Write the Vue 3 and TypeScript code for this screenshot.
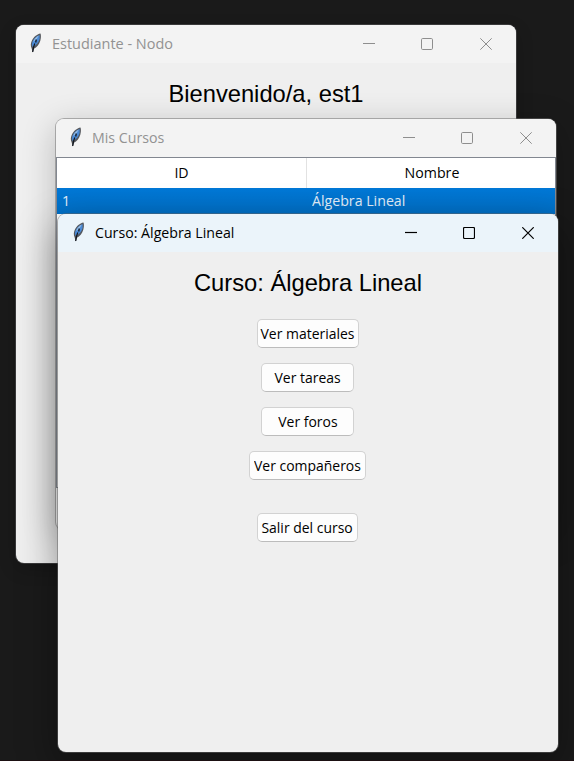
<script setup lang="ts">
interface WindowInfo {
  id: string
  title: string
}

const windows: WindowInfo[] = [
  { id: 'student', title: 'Estudiante - Nodo' },
  { id: 'courses', title: 'Mis Cursos' },
  { id: 'course', title: 'Curso: Álgebra Lineal' },
]

const actions = [
  { id: 'materials', label: 'Ver materiales' },
  { id: 'tasks', label: 'Ver tareas' },
  { id: 'forums', label: 'Ver foros' },
  { id: 'mates', label: 'Ver compañeros' },
  { id: 'leave', label: 'Salir del curso' },
]
</script>

<template>
  <main class="desktop">
    <section v-for="win in windows" :key="win.id" class="window" :class="win.id">
      <header class="titlebar">
        <svg class="feather" width="13" height="20" viewBox="0 0 13 20">
          <path d="M11.500.500C7.800 1.200 4.400 4.200 2.800 7.800 1.600 10.300 1.500 13 2.600 15.300L3.700 19.400 4.900 15.800C7.800 14.300 10.100 11.500 11.300 7.700 12 5.200 12.200 2.500 11.500.500Z" fill="#55585d" />
          <path d="M10.600 2C7.300 3.200 4.500 5.800 3.400 9 2.800 10.900 2.900 12.800 3.700 14 7.200 12.500 9.700 9.300 10.600 6Z" fill="#4a8ad6" />
          <path d="M9.800 2.600C7.200 4 5 6.300 4.200 9L7.400 6.600Z" fill="#9cc0e6" />
          <path d="M5.800 10.500C4.700 12.800 4.100 15.500 3.700 19M7.300 6.500 6.700 9.500" fill="none" stroke="#14181f" stroke-width="1.300" />
        </svg>
        <span class="title">{{ win.title }}</span>
        <div class="controls">
          <svg width="12" height="12" viewBox="0 0 12 12"><path d="M0 5.500H12" /></svg>
          <svg width="12" height="12" viewBox="0 0 12 12"><rect x=".5" y=".5" width="11" height="11" rx="1.200" /></svg>
          <svg width="12" height="12" viewBox="0 0 12 12"><path d="M.3.300 11.700 11.700M11.700.300.300 11.700" /></svg>
        </div>
      </header>

      <h1 v-if="win.id === 'student'" class="heading">Bienvenido/a, est1</h1>

      <div v-else-if="win.id === 'courses'" class="tree">
        <div class="row head">
          <div><span>ID</span></div>
          <div><span>Nombre</span></div>
        </div>
        <div class="row selected">
          <div><span>1</span></div>
          <div><span>Álgebra Lineal</span></div>
        </div>
      </div>

      <template v-else>
        <h1 class="heading">Curso: Álgebra Lineal</h1>
        <div class="actions">
          <button v-for="action in actions" :key="action.id" :class="action.id">
            <span>{{ action.label }}</span>
          </button>
        </div>
      </template>
    </section>
  </main>
</template>

<style>
body {
  background: #1a1a1a;
}
</style>

<style scoped>
.desktop {
  position: relative;
  width: 574px;
  height: 761px;
  overflow: hidden;
  background: #1a1a1a;
  border-bottom: 1px solid #1b1012;
  box-sizing: border-box;
  font-family: "Open Sans", "Noto Sans", sans-serif;
}
.window {
  position: absolute;
  width: 500px;
  height: 538px;
  border-radius: 8px;
  background: #efefef;
  display: flex;
  flex-direction: column;
}
.student {
  left: 16px;
  top: 25px;
  box-shadow: 0 0 0 1px #39393a, 0 6px 18px rgba(0, 0, 0, .2);
}
.courses {
  left: 56px;
  top: 119px;
  height: 411px;
  box-shadow: 0 0 0 1px rgba(110, 110, 110, .5), 0 8px 34px rgba(0, 0, 0, .24);
}
.course {
  left: 58px;
  top: 214px;
  box-shadow: 0 0 0 1px rgba(100, 100, 100, .5), 0 14px 38px 2px rgba(0, 0, 0, .36);
}
.titlebar {
  display: flex;
  align-items: center;
  flex: none;
  height: 38px;
  box-sizing: border-box;
  padding: 0 24px 0 13px;
  background: #f3f3f3;
  border-radius: 8px 8px 0 0;
  color: #929292;
}
.course .titlebar {
  background: #ebf4fa;
  color: #000;
  padding-left: 14px;
}
.feather {
  flex: none;
  margin-top: -3px;
}
.title {
  margin: -2px 0 0 10px;
  font-size: 15px;
  line-height: 20px;
  white-space: nowrap;
  transform-origin: left;
  transform: scaleX(.945);
}
.student .title {
  transform: scaleX(.965);
}
.controls {
  display: flex;
  gap: 46px;
  margin-left: auto;
}
.controls svg:last-child {
  margin-left: 1px;
}
.controls svg {
  fill: none;
  stroke: #8e8e8e;
  stroke-width: 1;
}
.course .controls svg {
  stroke: #000;
  stroke-width: 1.200;
}
.heading {
  margin: 14px 0 0;
  text-align: center;
  font: 400 24px/34px "Liberation Sans", Arial, sans-serif;
  color: #000;
  white-space: nowrap;
  transform: scaleX(.988);
}
.tree {
  height: 331px;
  box-sizing: border-box;
  border: 1px solid #828790;
  background: #fff;
  color: #000;
}
.row {
  display: grid;
  grid-template-columns: 250px 1fr;
  font-size: 15px;
  line-height: 25px;
}
.row span {
  display: inline-block;
  transform: scaleX(.945);
}
.head {
  height: 30px;
  text-align: center;
  line-height: 28px;
}
.head > div:first-child {
  border-right: 1px solid #e2e2e2;
}
.head > div + div {
  padding-left: 2px;
}
.selected {
  height: 26px;
  background: linear-gradient(#0078d7, #006fc5);
  color: #e3effa;
}
.selected > div {
  padding-left: 5px;
}
.selected span {
  transform-origin: left;
}
.actions {
  display: flex;
  flex-direction: column;
  align-items: center;
  gap: 14.750px;
  margin: 19.300px 1px 0 0;
}
button {
  box-sizing: border-box;
  width: 93px;
  height: 29px;
  padding: 0 0 1px;
  display: flex;
  align-items: center;
  justify-content: center;
  border: 1px solid #d2d2d2;
  border-bottom-color: #bcbcbc;
  border-radius: 5px;
  background: #fdfdfd;
  color: #000;
  font: 15px/20px "Open Sans", "Noto Sans", sans-serif;
}
button span {
  white-space: nowrap;
  flex: none;
  transform: scaleX(.93);
}
.materials {
  width: 102px;
}
.mates {
  width: 117px;
}
.leave {
  width: 101px;
  margin-top: 18.500px;
}
</style>
